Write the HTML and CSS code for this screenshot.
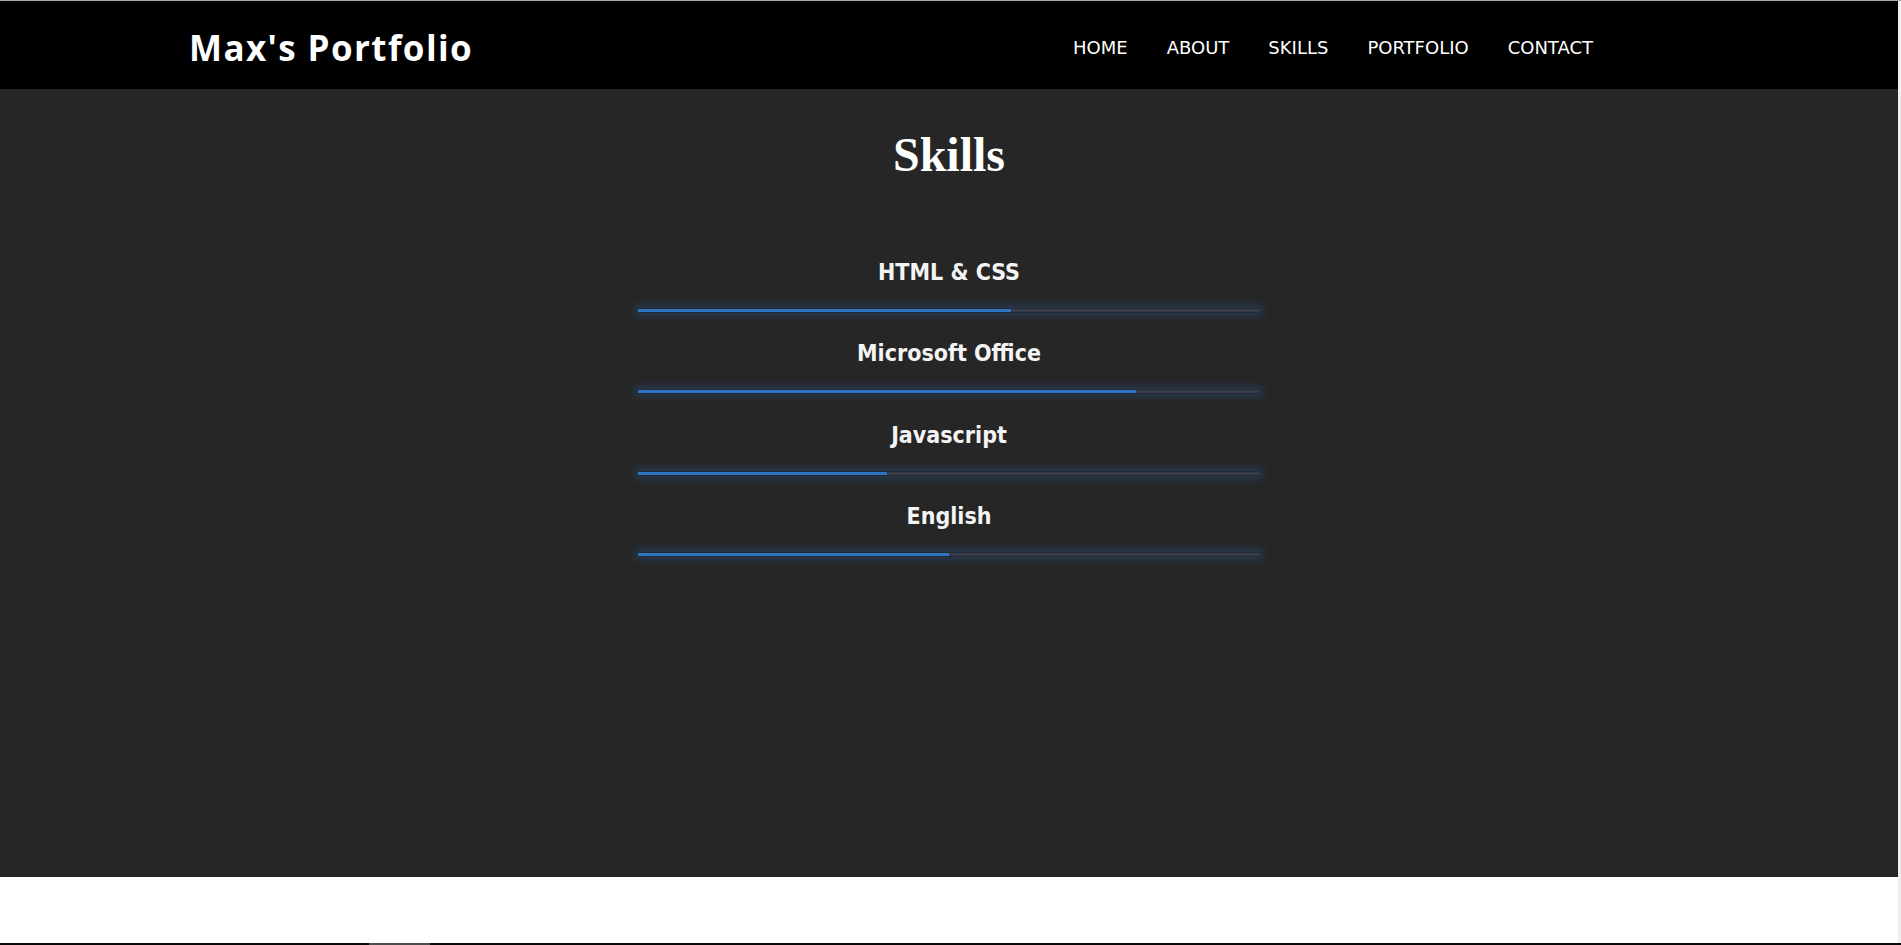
FILE: index.html
```html
<!DOCTYPE html>
<html lang="en">
<head>
<meta charset="utf-8">
<title>Max's Portfolio</title>
<link rel="stylesheet" href="styles.css">
</head>
<body>
<div class="window">
  <div class="viewport">
    <div class="page">
      <header class="topbar">
        <div class="logo">Max's Portfolio</div>
        <nav class="nav">
          <a class="nav-link" href="#home">HOME</a>
          <a class="nav-link" href="#about">ABOUT</a>
          <a class="nav-link" href="#skills">SKILLS</a>
          <a class="nav-link" href="#portfolio">PORTFOLIO</a>
          <a class="nav-link" href="#contact">CONTACT</a>
        </nav>
      </header>
      <main class="skills" id="skills">
        <h1 class="skills-title">Skills</h1>
        <div class="skill-list">
          <div class="skill">
            <div class="skill-label">HTML &amp; CSS</div>
            <div class="bar"><div class="bar-fill" style="width:60%"></div></div>
          </div>
          <div class="skill">
            <div class="skill-label">Microsoft Office</div>
            <div class="bar"><div class="bar-fill" style="width:80%"></div></div>
          </div>
          <div class="skill">
            <div class="skill-label">Javascript</div>
            <div class="bar"><div class="bar-fill" style="width:40%"></div></div>
          </div>
          <div class="skill">
            <div class="skill-label">English</div>
            <div class="bar"><div class="bar-fill" style="width:50%"></div></div>
          </div>
        </div>
      </main>
      <div class="blank"></div>
    </div>
    <div class="vscroll"></div>
  </div>
  <div class="hscroll"><div class="hthumb"></div></div>
</div>
</body>
</html>
```

FILE: styles.css
```css
html, body {
  margin: 0;
  padding: 0;
  height: 100%;
  overflow: hidden;
  background: #ffffff;
}

.window {
  height: 945px;
  display: flex;
  flex-direction: column;
  border-top: 1px solid #a9a9a9;
  box-sizing: border-box;
}

.viewport {
  flex: 1;
  display: flex;
  min-height: 0;
}

.page {
  flex: 1;
  display: flex;
  flex-direction: column;
}

.vscroll {
  width: 3px;
  background: #efefef;
}

.hscroll {
  height: 2px;
  background: #0a0a0a;
  padding-left: 369px;
}

.hthumb {
  width: 61px;
  height: 2px;
  background: #4d4d4d;
}

/* Header */
.topbar {
  height: 88px;
  box-sizing: border-box;
  background: #000000;
  display: flex;
  align-items: center;
  justify-content: space-between;
  padding: 5px 305px 0 189px;
}

.logo {
  font-family: "Open Sans", "Lato", sans-serif;
  font-weight: 700;
  font-size: 35px;
  line-height: 48px;
  letter-spacing: 1.4px;
  color: #ffffff;
}

.nav {
  display: flex;
  gap: 39px;
}

.nav-link {
  font-family: "DejaVu Sans", "Verdana", sans-serif;
  font-size: 18px;
  line-height: 24px;
  color: #ffffff;
  text-decoration: none;
}

/* Skills section */
.skills {
  height: 788px;
  box-sizing: border-box;
  background: #262626;
  padding-top: 37.5px;
  display: flex;
  flex-direction: column;
  align-items: center;
}

.skills-title {
  margin: 0;
  font-family: "Liberation Serif", "Times New Roman", serif;
  font-weight: 700;
  font-size: 48px;
  line-height: 56px;
  color: #ffffff;
  text-align: center;
}

.skill-list {
  margin-top: 75.4px;
  width: 624px;
  display: flex;
  flex-direction: column;
}

.skill {
  padding-bottom: 26.5px;
}

.skill-label {
  font-family: "DejaVu Sans Condensed", "DejaVu Sans", sans-serif;
  font-stretch: condensed;
  font-weight: 700;
  font-size: 23px;
  line-height: 28px;
  color: #f4f4f4;
  text-align: center;
}

.bar {
  margin-top: 22px;
  height: 5px;
  box-sizing: border-box;
  border: 1px solid #232a33;
  background: #383c4a;
  box-shadow: 0 0 9px 2px rgba(38, 104, 180, 0.38);
}

.bar-fill {
  height: 3px;
  background: #2d74c2;
}

.blank {
  flex: 1;
  background: #ffffff;
}
```
